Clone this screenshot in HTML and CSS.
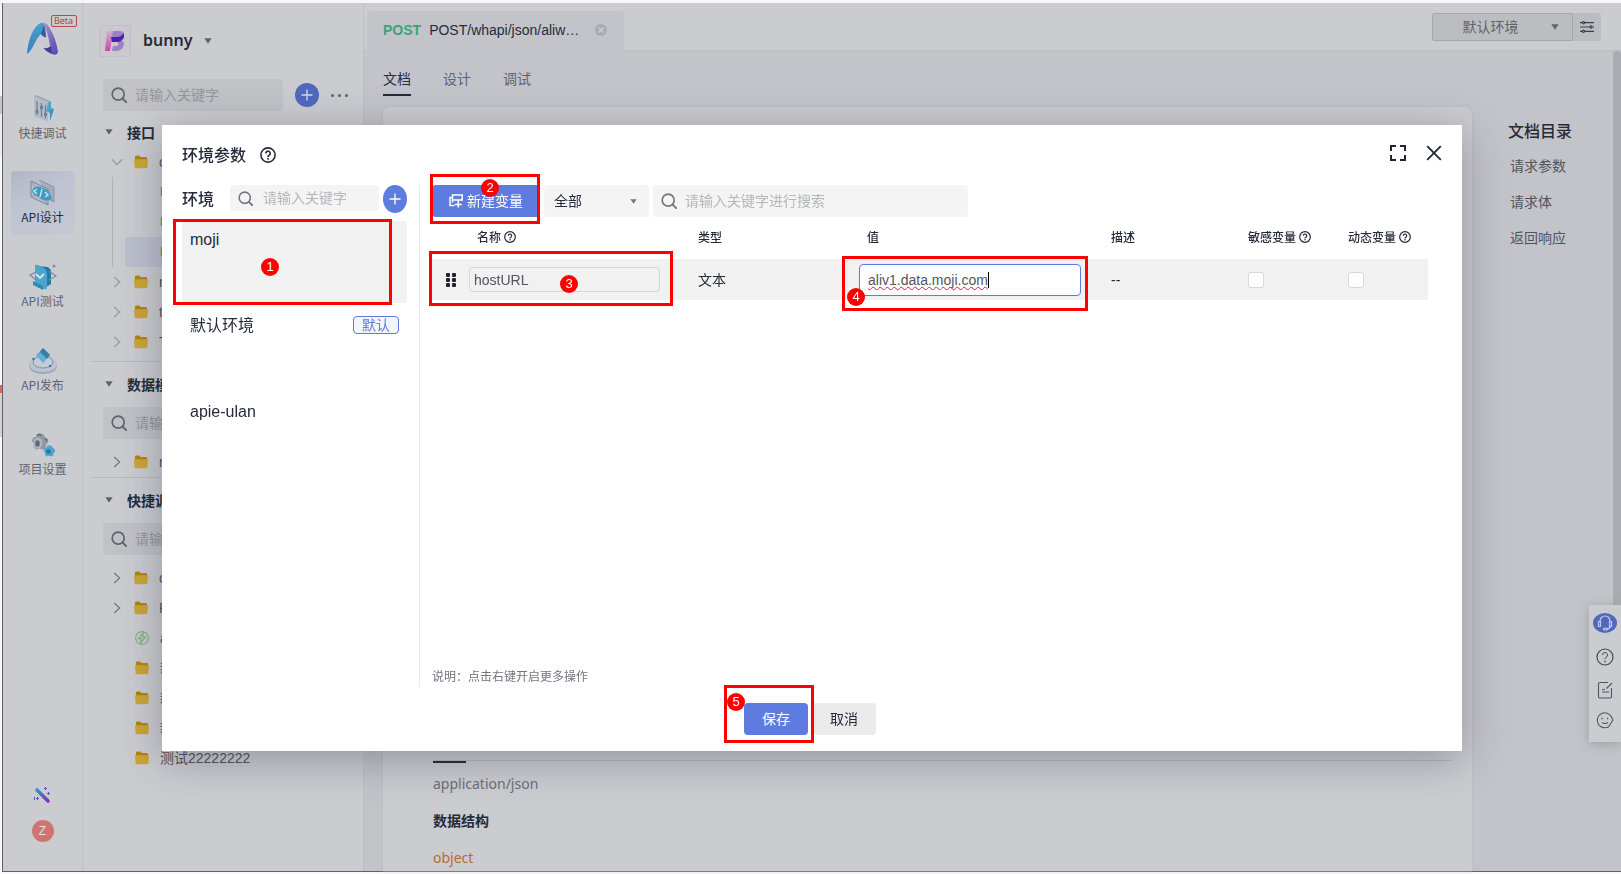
FILE: index.html
```html
<!DOCTYPE html>
<html lang="zh-CN">
<head>
<meta charset="utf-8">
<title>环境参数</title>
<link rel="stylesheet" href="styles.css">
</head>
<body>
<svg class="defs" aria-hidden="true">
  <defs>
    <linearGradient id="g-blue" x1="0" y1="0" x2="0" y2="1"><stop offset="0" stop-color="#45a3cb"/><stop offset="1" stop-color="#3f7cbd"/></linearGradient>
    <linearGradient id="g-purple" x1="0" y1="0" x2="1" y2="1"><stop offset="0" stop-color="#b58fcd"/><stop offset="1" stop-color="#4549b0"/></linearGradient>
    <linearGradient id="g-pink" x1="0" y1="0" x2="0" y2="1"><stop offset="0" stop-color="#c9b2cf"/><stop offset="1" stop-color="#cb46a8"/></linearGradient>
    <linearGradient id="g-wand" x1="0" y1="0" x2="1" y2="1"><stop offset="0" stop-color="#2d95cf"/><stop offset="1" stop-color="#8a2cc0"/></linearGradient>
    <linearGradient id="g-cyan" x1="0" y1="0" x2="1" y2="1"><stop offset="0" stop-color="#63b9d8"/><stop offset="1" stop-color="#2a7da8"/></linearGradient>
    <symbol id="i-search" viewBox="0 0 16 16"><circle cx="7.2" cy="7.2" r="6" fill="none" stroke="currentColor" stroke-width="1.7"/><path d="M11.6 11.6l3.6 3.6" stroke="currentColor" stroke-width="1.9" stroke-linecap="round"/></symbol>
    <symbol id="i-plus" viewBox="0 0 12 12"><path d="M6 .5v11M.5 6h11" stroke="currentColor" stroke-width="1.3" fill="none"/></symbol>
    <symbol id="i-folder" viewBox="0 0 14 14"><path d="M1 1.5Q1 .6 2 .6h3.2l1.4 1.5H12q1 0 1 1V8H1z" fill="#b5850b"/><path d="M0 4.2h14l-.6 8q-.1 1.1-1.2 1.1H1.8q-1.1 0-1.2-1.1z" fill="#caa636"/></symbol>
    <symbol id="i-chev" viewBox="0 0 8 12"><path d="M1.2.8L6.6 6 1.2 11.2" fill="none" stroke="currentColor" stroke-width="1.1"/></symbol>
    <symbol id="i-caret" viewBox="0 0 8 6"><path d="M.3.3h7.4L4 5.8z" fill="currentColor"/></symbol>
    <symbol id="i-help" viewBox="0 0 16 16"><circle cx="8" cy="8" r="7.1" fill="none" stroke="currentColor" stroke-width="1.6"/><path d="M5.8 6.4a2.2 2.2 0 1 1 3.4 1.8Q8 8.9 8 9.9" fill="none" stroke="currentColor" stroke-width="1.6"/><circle cx="8" cy="11.8" r="1" fill="currentColor"/></symbol>
    <path id="i-cog" d="M5 1l3-.8 3 1 1 2.300 2.600 1.500.5 3-2 2-.3 3-2.800 1.500-2.500-1-3 .8L2.300 12l.3-2.600L.8 7 2 4l2.600-.7z"/>
  </defs>
</svg>

<div class="app">
  <nav class="rail" aria-label="主导航">
    <div class="brand">
      <svg width="32" height="34" viewBox="0 0 32 34"><path d="M0 32C1 18 6 4 14 1Q17 0 18 2L19 13Q20 16 17 15L14 12C8 17 6 28 0 32z" fill="url(#g-blue)"/><path d="M14 12l3-9 2 12q-2 1-5-3z" fill="#3d55a8"/><path d="M16 1Q20 1 22 5Q29 16 31 30Q30 34 25 32L18 28Q23 27 23 24Q21 10 16 1z" fill="url(#g-purple)"/><path d="M16 26q4 1 8-2l1 8q-5-2-9-6z" fill="#473c94"/></svg>
      <span class="beta">Beta</span>
    </div>
    <a class="rail-item" href="#">
      <svg width="28" height="28" viewBox="0 0 28 28"><path d="M5 1l14 6v20L5 21z" fill="#b3bcc9"/><path d="M5 1l2-1 14 6v8l-2-1V7z" fill="#98a5b5"/><path d="M8 6v14M12.500 8v14M16.500 10v14" stroke="#727e92" stroke-width="1.300"/><path d="M6.500 15h3v3h-3zM11 11h3v3h-3zM15 18h3v3h-3z" fill="#727e92"/><path d="M19 8l3-2v7l3 1-4 12v-8l-4-2z" fill="url(#g-cyan)"/></svg>
      <span>快捷调试</span></a>
    <a class="rail-item is-active" href="#">
      <svg width="28" height="28" viewBox="0 0 28 28"><path d="M10 1l15 7v15l-4-2" fill="#a3adbf" stroke="#8894aa"/><path d="M2 2l17 8v16L2 18z" fill="#b3bac9" stroke="#7d8799"/><path d="M2 2l17 24M19 10L2 18" stroke="#8c95a5" stroke-width=".7"/><path d="M3 12Q6 5 14 9q7 2 9 11-8 4-13-2-5-1-7-6z" fill="#3a9cc4"/><path d="M8 10l-3 2 3 3M13 10l-2 8M16 13l3 3-3 2" stroke="#d6e4ec" stroke-width="1.300" fill="none"/></svg>
      <span>API设计</span></a>
    <a class="rail-item" href="#">
      <svg width="28" height="28" viewBox="0 0 28 28"><path d="M8 3l11 1 3 3v14l-8 5-2-8z" fill="#2579a5"/><path d="M6 3q0-2 3-1l7 4q2 1 2 4v15q0 2-2 1L6 21z" fill="#4ba5cf"/><path d="M4 18l10 5v4L4 22z" fill="#2f8ab5"/><path d="M7 9l-6 3 6 5M20 8l7 5-7 4" fill="none" stroke="#7d8ba0" stroke-width="1.200"/><path d="M7 11l4 4 4-4" fill="none" stroke="#dce6ee" stroke-width="1.800"/><circle cx="25" cy="3" r="1.500" fill="#7d8ba0"/></svg>
      <span>API测试</span></a>
    <a class="rail-item" href="#">
      <svg width="28" height="28" viewBox="0 0 28 28"><path d="M0 16v4q2 7 14 7t14-7v-4z" fill="#9ba8c0"/><ellipse cx="14" cy="17" rx="14" ry="8" fill="#bcc3d2"/><ellipse cx="14" cy="15" rx="10" ry="6" fill="#c4cad6" stroke="#8390a7"/><path d="M7 8l7-7 7 7-7 8z" fill="#5fb2d5"/><path d="M14 1l7 7-3 4-7-7z" fill="#3a7fa2"/><circle cx="4.500" cy="12" r="1.300" fill="#3a7fa2"/><circle cx="21" cy="19" r="1.300" fill="#3a7fa2"/></svg>
      <span>API发布</span></a>
    <a class="rail-item" href="#">
      <svg width="28" height="28" viewBox="0 0 28 28"><g fill="#8f97a5" transform="translate(2 2) scale(1.150)"><use href="#i-cog"/></g><ellipse cx="9" cy="12" rx="4.500" ry="5.500" fill="#b0b5c0"/><ellipse cx="8.500" cy="12.500" rx="2.200" ry="3.200" fill="#5d6675"/><path d="M8 4.500q2-2 4 0M16 8l2 1.500" stroke="#5d6675" stroke-width="1.500" fill="none"/><g fill="#4ba5cc" transform="translate(14 14) scale(.8)"><use href="#i-cog"/></g><circle cx="19.500" cy="20.500" r="2.300" fill="#2675a0"/></svg>
      <span>项目设置</span></a>
    <div class="rail-foot">
      <svg width="18" height="18" viewBox="0 0 18 18"><path d="M3 4l11 11" stroke="url(#g-wand)" stroke-width="3.600" stroke-linecap="round"/><path d="M11.500 1v3M10 2.500h3M14.500 6v3M13 7.500h3M3.500 11v3M2 12.500h3M.5 11v3" stroke="#5a55c0"/></svg>
      <span class="avatar">Z</span>
    </div>
  </nav>

  <aside class="tree">
    <header class="project">
      <svg class="project-logo" width="32" height="32" viewBox="0 0 32 32"><rect x=".5" y=".5" width="31" height="31" rx="1" fill="#cbc8d0" stroke="#c5bccb"/><path d="M0 8l4-4 4 4 4-4 4 4 4-4 4 4 4-4 4 4M0 16l4-4 4 4 4-4 4 4 4-4 4 4 4-4 4 4M0 24l4-4 4 4 4-4 4 4 4-4 4 4 4-4 4 4" fill="none" stroke="#c5bccb" stroke-width=".8"/><path d="M12 6h8q6 0 5 5-1 4-4 4 4 1 4 4-1 7-8 7h-4l1-5h4q3-2 0-4h-6z" fill="#9b80ca"/><path d="M8 6h6l-3 20H6z" fill="url(#g-pink)"/><path d="M12 12h6q4 0 7-4 1 8-6 9h-6z" fill="#4a24b0"/></svg>
      <strong>bunny</strong><svg class="muted" width="8" height="6"><use href="#i-caret"/></svg>
    </header>
    <div class="tree-tools">
      <label class="search search-dim"><svg width="16" height="16"><use href="#i-search"/></svg><input aria-label="搜索接口" placeholder="请输入关键字"></label>
      <button class="round-btn" aria-label="新建"><svg width="12" height="12"><use href="#i-plus"/></svg></button>
      <button class="dots" aria-label="更多"><i></i><i></i><i></i></button>
    </div>
    <section class="group">
      <h2><svg width="8" height="6"><use href="#i-caret"/></svg>接口</h2>
      <div class="node"><svg class="chev open" width="8" height="12"><use href="#i-chev"/></svg><svg width="14" height="14"><use href="#i-folder"/></svg><span>c</span></div>
      <div class="branch">
        <div class="leaf"><b>P</b></div>
        <div class="leaf"><b>P</b></div>
        <div class="leaf is-selected"><b>P</b></div>
      </div>
      <div class="node"><svg class="chev" width="8" height="12"><use href="#i-chev"/></svg><svg width="14" height="14"><use href="#i-folder"/></svg><span>m</span></div>
      <div class="node"><svg class="chev" width="8" height="12"><use href="#i-chev"/></svg><svg width="14" height="14"><use href="#i-folder"/></svg><span>t</span></div>
      <div class="node"><svg class="chev" width="8" height="12"><use href="#i-chev"/></svg><svg width="14" height="14"><use href="#i-folder"/></svg><span>T</span></div>
    </section>
    <section class="group">
      <h2><svg width="8" height="6"><use href="#i-caret"/></svg>数据模型</h2>
      <label class="search search-dim"><svg width="16" height="16"><use href="#i-search"/></svg><input aria-label="搜索数据模型" placeholder="请输入关键字"></label>
      <div class="node"><svg class="chev dark" width="8" height="12"><use href="#i-chev"/></svg><svg width="14" height="14"><use href="#i-folder"/></svg><span>m</span></div>
    </section>
    <section class="group">
      <h2><svg width="8" height="6"><use href="#i-caret"/></svg>快捷调试</h2>
      <label class="search search-dim"><svg width="16" height="16"><use href="#i-search"/></svg><input aria-label="搜索快捷调试" placeholder="请输入关键字"></label>
      <div class="node"><svg class="chev dark" width="8" height="12"><use href="#i-chev"/></svg><svg width="14" height="14"><use href="#i-folder"/></svg><span>c</span></div>
      <div class="node"><svg class="chev dark" width="8" height="12"><use href="#i-chev"/></svg><svg width="14" height="14"><use href="#i-folder"/></svg><span>P</span></div>
      <div class="node bare"><svg width="14" height="14" viewBox="0 0 14 14"><circle cx="7" cy="7" r="6.400" fill="none" stroke="#84b183" stroke-width="1.100"/><path d="M8 2L3.500 7.600h2.700L5.500 12l5-5.800H7.600z" fill="none" stroke="#84b183" stroke-width="1.200"/></svg><span>a</span></div>
      <div class="node bare"><svg width="14" height="14"><use href="#i-folder"/></svg><span>新</span></div>
      <div class="node bare"><svg width="14" height="14"><use href="#i-folder"/></svg><span>新</span></div>
      <div class="node bare"><svg width="14" height="14"><use href="#i-folder"/></svg><span>新</span></div>
      <div class="node bare"><svg width="14" height="14"><use href="#i-folder"/></svg><span>测试22222222</span></div>
    </section>
  </aside>

  <main class="main">
    <header class="topbar">
      <div class="file-tab"><b>POST</b><span>POST/whapi/json/aliw…</span>
        <button aria-label="关闭标签"><svg width="12" height="12" viewBox="0 0 12 12"><circle cx="6" cy="6" r="6" fill="#aaabaf"/><path d="M3.500 3.500l5 5M8.500 3.500l-5 5" stroke="#cfd0d4" stroke-width="1.200"/></svg></button>
      </div>
      <div class="env-pick">
        <button class="env-select">默认环境<svg width="8" height="6"><use href="#i-caret"/></svg></button>
        <button class="env-set" aria-label="环境设置"><svg width="14" height="12" viewBox="0 0 14 12" fill="none" stroke="#3b4050" stroke-width="1.200"><path d="M0 1.700h2M5 1.700h9M0 6h9.500M12.500 6H14M0 10.300h2M5 10.300h9"/><circle cx="3.500" cy="1.700" r="1.100"/><circle cx="11" cy="6" r="1.100"/><circle cx="3.500" cy="10.300" r="1.100"/></svg></button>
      </div>
    </header>
    <nav class="views"><a class="is-active" href="#">文档</a><a href="#">设计</a><a href="#">调试</a></nav>
    <div class="doc-row">
      <article class="doc">
        <div class="doc-line"></div>
        <p>application/json</p>
        <h3>数据结构</h3>
        <p class="type">object</p>
      </article>
      <nav class="toc"><h2>文档目录</h2><a href="#">请求参数</a><a href="#">请求体</a><a href="#">返回响应</a></nav>
    </div>
    <div class="scroll-thumb"></div>
    <div class="helpers">
      <button class="agent" aria-label="客服"><svg width="16" height="16" viewBox="0 0 16 16" fill="none" stroke="#c3cbe8" stroke-width="1.200"><path d="M3 7V6a5 5 0 0 1 10 0v1M1.500 6.500h2v5h-2zM12.500 6.500h2v5h-2zM13.500 11.500q-1 2.500-4 2.500"/><ellipse cx="8.500" cy="14" rx="2" ry="1"/></svg></button>
      <button aria-label="帮助"><svg width="18" height="18" viewBox="0 0 18 18" fill="none" stroke="#434752"><circle cx="9" cy="9" r="8" stroke-width="1.200"/><path d="M6.500 7a2.500 2.500 0 1 1 3.700 2.200Q9 10 9 11.200"/><path d="M9 12.800v1.400" stroke-width="1.400"/></svg></button>
      <button aria-label="反馈"><svg width="16" height="18" viewBox="0 0 16 18" fill="none" stroke="#505565" stroke-width="1.100"><path d="M11 1.500H3Q1.500 1.500 1.500 3v12.500Q1.500 17 3 17h10q1.500 0 1.500-1.500V7M9.500 7.500L15 2M5 8.500h3M5 11h7"/></svg></button>
      <button aria-label="评价"><svg width="18" height="18" viewBox="0 0 18 18" fill="none" stroke="#505565" stroke-width="1.100"><path d="M13 15.500A7.500 7.500 0 1 1 15.500 6L17 9l-4.500 7"/><path d="M5.500 7.500h1.200M11 7.500h1.200" stroke-width="1.600"/><path d="M6 11.500q3 2 6 0"/></svg></button>
    </div>
  </main>
</div>

<div class="overlay">
  <section class="modal" role="dialog" aria-labelledby="dlg-title">
    <header class="modal-head">
      <h1 id="dlg-title">环境参数</h1>
      <svg width="16" height="16"><use href="#i-help"/></svg>
      <div class="modal-actions">
        <button aria-label="全屏"><svg width="16" height="16" viewBox="0 0 16 16" fill="none" stroke="#1f2533" stroke-width="2"><path d="M1 6V1h5M10 1h5v5M15 10v5h-5M6 15H1v-5"/></svg></button>
        <button aria-label="关闭"><svg width="16" height="16" viewBox="0 0 16 16" fill="none" stroke="#1f2533" stroke-width="1.800"><path d="M1.200 1.200l13.600 13.600M14.800 1.200L1.200 14.800"/></svg></button>
      </div>
    </header>
    <div class="modal-body">
      <aside class="envs">
        <div class="envs-head">
          <h2>环境</h2>
          <label class="search"><svg width="15" height="15"><use href="#i-search"/></svg><input aria-label="搜索环境" placeholder="请输入关键字"></label>
          <button class="round-btn tall" aria-label="新建环境"><svg width="12" height="12"><use href="#i-plus"/></svg></button>
        </div>
        <ul>
          <li class="is-active">moji<span class="mark mark-1"><em>1</em></span></li>
          <li>默认环境<span class="tag">默认</span></li>
          <li>apie-ulan</li>
        </ul>
      </aside>
      <div class="vars">
        <div class="vars-tools">
          <div class="holder"><button class="primary add"><svg width="14" height="14" viewBox="0 0 14 14" fill="none" stroke="#fff" stroke-width="1.500"><path d="M3.500 8.500V1h9.700v5H3.500M4 3.500H1v8h4.500M9.300 6.500v7M6 10.500h6.800"/></svg>新建变量</button><span class="mark mark-2"><em>2</em></span></div>
          <div class="filter"><select aria-label="类型筛选"><option>全部</option></select><svg width="7" height="5"><use href="#i-caret"/></svg></div>
          <label class="search wide"><svg width="16" height="16"><use href="#i-search"/></svg><input aria-label="搜索变量" placeholder="请输入关键字进行搜索"></label>
        </div>
        <table>
          <colgroup><col class="c-grip"><col class="c-name"><col class="c-type"><col class="c-value"><col class="c-desc"><col class="c-flag"><col class="c-last"></colgroup>
          <thead><tr><th></th><th>名称<svg width="12" height="12"><use href="#i-help"/></svg></th><th>类型</th><th>值</th><th>描述</th><th>敏感变量<svg width="12" height="12"><use href="#i-help"/></svg></th><th>动态变量<svg width="12" height="12"><use href="#i-help"/></svg></th></tr></thead>
          <tbody><tr>
            <td class="grip"><svg width="10" height="14" viewBox="0 0 10 14" fill="#1f2533"><rect width="4" height="4" rx="1"/><rect x="6" width="4" height="4" rx="1"/><rect y="5" width="4" height="4" rx="1"/><rect x="6" y="5" width="4" height="4" rx="1"/><rect y="10" width="4" height="4" rx="1"/><rect x="6" y="10" width="4" height="4" rx="1"/></svg></td>
            <td class="field"><input class="name" aria-label="名称" value="hostURL"><span class="mark mark-3"><em>3</em></span></td>
            <td>文本</td>
            <td class="field"><div class="value" role="textbox" contenteditable="true" aria-label="值"><span>aliv1.data.moji.com</span><i class="cursor"></i></div><span class="mark mark-4"><em>4</em></span></td>
            <td>--</td>
            <td><input type="checkbox" aria-label="敏感变量"></td>
            <td><input type="checkbox" aria-label="动态变量"></td>
          </tr></tbody>
        </table>
        <p class="note">说明：点击右键开启更多操作</p>
      </div>
    </div>
    <footer class="modal-foot">
      <div class="holder"><button class="primary">保存</button><span class="mark mark-5"><em>5</em></span></div>
      <button class="plain">取消</button>
    </footer>
  </section>
</div>
</body>
</html>
```

FILE: styles.css
```css
* { box-sizing: border-box; }

:root {
  --ink: #252b3a;
  --blue: #5e7ce0;
  --panel: #cbccd0;
  --ground: #c3c4c9;
  --dim: #60636e;
}

body {
  margin: 0;
  height: 100vh;
  display: flex;
  padding: 3px 0 2px 2px;
  overflow: hidden;
  background: linear-gradient(#f6f6f6 11%, #c6c6c6 11% 13%, #ededed 13% 18%, #f8f8f8 18% 44%, #d9694f 44% 45%, #d2d2d2 45% 50%, #f8f8f8 50%);
  color: var(--ink);
  font: 14px/20px "Liberation Sans", "Noto Sans CJK SC", sans-serif;
}

h1, h2, h3, p, ul { margin: 0; padding: 0; font-weight: normal; }
a { color: inherit; text-decoration: none; }
button { border: 0; padding: 0; background: none; color: inherit; font: inherit; cursor: pointer; display: flex; align-items: center; justify-content: center; }
input { font: inherit; color: inherit; margin: 0; }
svg { flex: none; display: block; }
.defs { position: absolute; width: 0; height: 0; }

.app {
  flex: 1;
  display: grid;
  grid-template-columns: 81px 280px 1fr;
  grid-template-rows: minmax(0, 1fr);
  min-width: 0;
  min-height: 0;
  background: var(--panel);
  border-left: 1px solid #606166;
  border-bottom: 1px solid #606166;
}

/* navigation rail */
.rail { display: flex; flex-direction: column; align-items: center; gap: 20px; border-right: 2px solid #c4c5c9; padding: 12px 0 29px; }
.brand { width: 64px; height: 52px; position: relative; padding: 7px 16px; }
.beta { position: absolute; top: 0; left: 40px; width: 26px; height: 12px; border: 1px solid #c04450; border-radius: 2px; font: 9px/10px "Noto Sans", sans-serif; color: #b83b48; text-align: center; }
.rail-item { width: 64px; height: 64px; display: flex; flex-direction: column; align-items: center; gap: 2px; padding: 8px 0 0; border-radius: 4px; color: var(--dim); font-size: 12px; line-height: 16px; }
.rail-item span { font-family: "Noto Sans CJK SC", sans-serif; white-space: nowrap; }
.rail-item.is-active { color: var(--ink); background: linear-gradient(150deg, #b2b6c4, #c0c4d2 40%, #c5c7d2); }
.rail-foot { margin-top: auto; display: flex; flex-direction: column; align-items: center; gap: 16px; }
.avatar { width: 22px; height: 22px; border-radius: 50%; background: #cf7373; color: #dfdfe2; text-align: center; font-size: 12px; line-height: 22px; }

/* project tree */
.tree { padding: 22px 0 0 7px; border-right: 1px solid #bfc0c5; min-width: 0; overflow: hidden; }
.project { display: flex; align-items: center; height: 32px; padding-left: 8px; gap: 12px; }
.project strong { font: 600 16px/22px "Noto Sans", sans-serif; padding-bottom: 2px; }
.muted { color: var(--dim); }
.tree-tools { display: flex; align-items: center; padding: 22px 0 6px; }
.tree-tools .round-btn { margin: 0 12px; }
.search { display: flex; align-items: center; gap: 8px; height: 32px; padding: 0 8px; border-radius: 4px; background: #f4f4f4; color: #71757f; min-width: 0; }
.search input { width: 0; flex: 1; min-width: 0; border: 0; padding: 0; outline: 0; background: none; }
.search input::placeholder { color: #b4b6bb; opacity: 1; }
.search-dim { width: 180px; margin-left: 12px; background: #c1c2c6; color: var(--dim); }
.search-dim input::placeholder { color: #94969d; }
.round-btn { flex: none; width: 24px; height: 24px; border-radius: 50%; background: #5069bd; color: #d5daec; }
.dots { gap: 4px; }
.dots i { width: 3px; height: 3px; border-radius: 50%; background: var(--dim); }
.group { padding-bottom: 4px; }
.group + .group { border-top: 1px solid #b9babf; padding: 7px 0 0; }
.group h2 { display: flex; align-items: center; gap: 14px; height: 30px; padding-left: 14px; font-size: 14px; font-weight: 700; font-family: "Noto Sans CJK SC", sans-serif; }
.group h2 svg { color: var(--dim); }
.group .search { margin: 8px 0 8px 12px; }
.node { display: flex; align-items: center; height: 30px; padding-left: 22px; color: #4e525e; font-size: 14px; }
.node .chev { color: #93959b; margin-right: 13px; }
.node .chev + svg { margin-right: 11px; }
.node .dark { color: #6a6d75; }
.node .open { transform: rotate(90deg); }
.node.bare { padding-left: 44px; gap: 11px; }
.branch { margin-left: 21px; border-left: 1px solid #b1b2b7; }
.leaf { height: 30px; line-height: 30px; margin-left: 12px; padding-left: 35px; color: #46a67c; font-size: 12px; }
.leaf.is-selected { background: #bcbfce; border-radius: 4px; }

/* document area */
.main { position: relative; display: flex; flex-direction: column; min-width: 0; min-height: 0; background: var(--ground); }
.topbar { display: flex; justify-content: space-between; align-items: flex-start; flex: none; height: 48px; padding: 8px 20px 0 3px; background: var(--panel); border-bottom: 1px solid #bdbec3; }
.file-tab { display: flex; align-items: center; height: 40px; width: 257px; padding: 0 17px 2px 16px; background: var(--ground); border-radius: 4px 4px 0 0; }
.file-tab b { color: #38a578; margin-right: 8px; }
.file-tab button { margin-left: auto; }
.env-pick { display: flex; height: 28px; margin-top: 2px; background: #bcbdc1; border-radius: 3px; }
.env-select { width: 141px; border: 1px solid #a6a7ac; border-radius: 2px; color: var(--dim); gap: 32px; padding-left: 16px; }
.env-set { width: 28px; }
.views { display: flex; gap: 32px; padding: 18px 0 0 19px; color: var(--dim); }
.views a { height: 27px; border-bottom: 2px solid transparent; }
.views .is-active { color: var(--ink); border-color: var(--ink); }
.doc-row { flex: 1; display: flex; min-height: 0; padding: 11px 20px 0 19px; }
.doc { flex: 1; background: var(--panel); border-radius: 8px 8px 0 0; box-shadow: 0 0 3px #b6b7bc; padding: 0 20px 0 50px; display: flex; flex-direction: column; justify-content: flex-end; font: 14px/20px "Noto Sans", "Noto Sans CJK SC", sans-serif; color: #6b6e78; }
.doc-line { border-top: 1px solid #b6b7bc; }
.doc-line::before { content: ""; display: block; width: 33px; border-top: 2px solid var(--ink); }
.doc p, .doc h3 { line-height: 37px; font-size: 14px; }
.doc h3 { font-weight: 700; font-family: "Noto Sans CJK SC", sans-serif; color: var(--ink); }
.doc p:first-of-type { margin-top: 2px; }
.doc .type { color: #b8692f; line-height: 26px; padding-top: 6px; }
.toc { width: 129px; padding: 13px 0 0 38px; display: flex; flex-direction: column; gap: 16px; color: #51545f; white-space: nowrap; }
.toc h2 { font-size: 16px; font-weight: 500; line-height: 20px; margin-left: -2px; color: var(--ink); font-family: "Noto Sans CJK SC", sans-serif; }
.scroll-thumb { position: absolute; right: 0; top: 48px; width: 8px; height: 72%; border-radius: 4px; background: #aaabb0; }
.helpers { position: absolute; right: 0; bottom: 129px; width: 32px; padding: 8px 0 13px; background: var(--panel); box-shadow: 0 2px 12px #9b9ca3; display: flex; flex-direction: column; align-items: center; gap: 15px; }
.helpers .agent { width: 24px; height: 20px; border-radius: 50%; background: #5069bd; }
.helpers button:last-child { margin-top: -3px; }

/* dialog */
.overlay { position: fixed; inset: 0; padding: 125px 159px 123px 162px; display: flex; overflow: hidden; }
.modal { flex: 1; display: flex; flex-direction: column; min-width: 0; background: #fff; box-shadow: 0 8px 40px rgba(37, 43, 58, .35); }
.modal-head { display: flex; align-items: center; gap: 14px; height: 60px; padding: 0 20px; }
.modal-head h1, .envs h2 { font: 500 16px/20px "Noto Sans CJK SC", sans-serif; white-space: nowrap; }
.modal-head h1 { padding-bottom: 2px; }
.modal-actions { margin-left: auto; display: flex; gap: 20px; padding-bottom: 4px; }
.modal-body { flex: 1; display: flex; min-height: 0; padding: 0 34px 0 20px; }
.envs { width: 238px; flex: none; padding-right: 12px; border-right: 1px solid #ebebeb; }
.envs-head { display: flex; align-items: flex-start; height: 36px; }
.envs h2 { width: 48px; padding-top: 3px; }
.envs .search { flex: 1; height: 26px; margin-right: 4px; gap: 10px; }
.round-btn.tall { height: 28px; background: var(--blue); color: #fff; }
.envs li { position: relative; display: flex; justify-content: space-between; align-items: flex-start; height: 82px; margin-bottom: 4px; padding: 9px 8px; list-style: none; font-size: 16px; line-height: 20px; border-radius: 4px; }
.envs li.is-active { background: #f1f1f1; }
.tag { border: 1px solid var(--blue); border-radius: 4px; background: #f2f5fc; color: var(--blue); font-size: 14px; line-height: 16px; padding: 0 8px; }
.vars { flex: 1; min-width: 0; display: flex; flex-direction: column; padding-left: 12px; }
.vars-tools { display: flex; gap: 4px; height: 32px; }
.holder { position: relative; }
.primary, .plain { height: 32px; width: 64px; border-radius: 4px; background: var(--blue); color: #fff; white-space: nowrap; }
.primary.add { width: 108px; gap: 4px; }
.plain { background: #ebebeb; color: var(--ink); }
.filter { display: grid; width: 105px; align-items: center; }
.filter > * { grid-area: 1 / 1; }
.filter select { height: 32px; border: 0; border-radius: 4px; padding: 0 10px; appearance: none; font: inherit; color: var(--ink); background: #f4f4f4; }
.filter svg { justify-self: end; margin-right: 12px; color: #71757f; pointer-events: none; }
.vars-tools .wide { width: 315px; }
table { width: 100%; border-collapse: collapse; table-layout: fixed; }
.c-grip { width: 37px; }
.c-name { width: 221px; }
.c-type { width: 169px; }
.c-value { width: 244px; }
.c-flag { width: 100px; }
.c-last { width: 88px; }
th { height: 42px; padding: 0 8px 2px; text-align: left; font: 500 12px/16px "Noto Sans CJK SC", sans-serif; white-space: nowrap; }
th svg { display: inline-block; vertical-align: -1px; margin-left: 3px; }
td { height: 41px; padding: 0 8px; background: #f1f1f1; vertical-align: middle; }
td.grip { padding-left: 14px; }
td.field { position: relative; padding: 0; }
.name { display: block; width: 191px; height: 25px; border: 1px solid #d6d7d9; border-radius: 4px; padding: 0 4px; background: none; color: #51545f; outline: 0; }
.value { display: flex; align-items: center; width: 222px; height: 32px; border: 1px solid var(--blue); border-radius: 4px; padding: 0 8px; background: #fff; color: #51545f; outline: 0; }
.value span { text-decoration: underline wavy #e0222c 1px; text-decoration-skip-ink: none; text-underline-offset: 1px; }
.cursor { width: 1px; height: 16px; background: #000; }
td input[type="checkbox"] { display: block; appearance: none; width: 16px; height: 16px; border: 1px solid #d6d7d9; border-radius: 3px; background: #fff; }
.note { margin-top: auto; padding-bottom: 2px; font-size: 12px; line-height: 16px; color: #71757f; }
.modal-foot { display: flex; justify-content: center; gap: 4px; padding: 16px 4px 16px 0; }

/* numbered callouts */
.mark { position: absolute; border: 3px solid #f00; pointer-events: none; }
.mark em { position: absolute; width: 18px; height: 18px; border-radius: 50%; background: #f00; color: #fff; font: 13px/18px "Liberation Sans", sans-serif; text-align: center; }
.mark-1 { inset: -2px 15px -2px -9px; }
.mark-1 em { left: 85px; top: 36px; }
.mark-2 { inset: -11px 0 -7px -2px; }
.mark-2 em { left: 48px; top: 2px; }
.mark-3 { left: -40px; width: 244px; top: -8px; bottom: -6px; }
.mark-3 em { left: 128px; top: 21px; }
.mark-4 { left: -17px; width: 246px; top: -3px; bottom: -11px; }
.mark-4 em { left: 2px; top: 29px; }
.mark-5 { inset: -18px -6px -8px -20px; }
.mark-5 em { left: 0; top: 5px; }
```
